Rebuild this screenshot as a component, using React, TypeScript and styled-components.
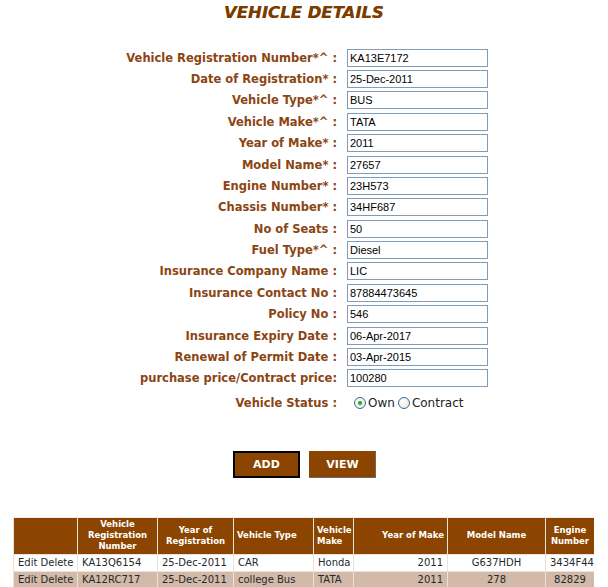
import React from "react";
import styled, { createGlobalStyle } from "styled-components";

const Global = createGlobalStyle`
  html, body { margin: 0; padding: 0; background: #fff; }
  body { font-family: "DejaVu Sans", Verdana, sans-serif; }
`;

const Page = styled.div`
  width: 608px;
  height: 587px;
  overflow: hidden;
  display: flex;
  flex-direction: column;
`;

const Title = styled.h1`
  margin: 0;
  padding-top: 3px;
  height: 20px;
  text-align: center;
  font: italic bold 16.5px "DejaVu Sans", Verdana, sans-serif;
  color: #7a3c00;
  text-shadow: 0 0 0.5px #a0601c;
`;

const Form = styled.div`
  margin-top: 24.3px;
  display: grid;
  grid-template-columns: 337px 141px;
  column-gap: 10px;
  grid-auto-rows: 21.4px;
  align-items: center;
`;

const Label = styled.div`
  text-align: right;
  font: bold 11.5px "DejaVu Sans", Verdana, sans-serif;
  color: #8b4513;
  white-space: nowrap;
`;

const Input = styled.input`
  box-sizing: border-box;
  width: 141px;
  height: 18px;
  margin: 0;
  padding: 0 2px;
  border: 1px solid #7f9db9;
  font: 11px "Liberation Sans", Arial, sans-serif;
  color: #000;
  background: #fff;
  outline: none;
`;

const StatusRow = styled.div`
  grid-column: 1 / span 2;
  height: 27px;
  display: grid;
  grid-template-columns: 337px auto;
  column-gap: 17px;
  align-items: center;
  align-self: start;
`;

const RadioGroup = styled.div`
  display: flex;
  align-items: center;
  font: 12px "DejaVu Sans", Verdana, sans-serif;
  color: #222;
`;

const RadioOption = styled.label`
  display: flex;
  align-items: center;
  gap: 2px;
  margin-right: 3px;
`;

const RadioCircle = styled.span<{ $checked?: boolean }>`
  box-sizing: border-box;
  width: 12px;
  height: 12px;
  border-radius: 50%;
  border: 1px solid #3c6890;
  background: radial-gradient(circle at 35% 35%, #ffffff 0%, #e4e4dc 100%);
  display: flex;
  align-items: center;
  justify-content: center;
  &::after {
    content: "";
    width: 4px;
    height: 4px;
    border-radius: 50%;
    background: ${(p) => (p.$checked ? "#34a834" : "transparent")};
    box-shadow: ${(p) => (p.$checked ? "0 0 1px #5fd05f" : "none")};
  }
`;

const Buttons = styled.div`
  margin-top: 40px;
  display: flex;
  justify-content: center;
  gap: 9px;
  padding-left: 1px;
`;

const Button = styled.button<{ $focused?: boolean }>`
  box-sizing: border-box;
  width: 67px;
  height: 27px;
  background: #8b4500;
  color: #fff;
  font: bold 11px "DejaVu Sans", Verdana, sans-serif;
  border: ${(p) => (p.$focused ? "2px solid #000" : "1px solid #8b4500")};
  border-right-color: ${(p) => (p.$focused ? "#000" : "#6a6a6a")};
  border-bottom-color: ${(p) => (p.$focused ? "#000" : "#6a6a6a")};
  padding: 0;
  cursor: pointer;
`;

const TableWrap = styled.div`
  margin-top: 39px;
  margin-left: 13px;
  width: 581px;
  overflow: hidden;
`;

const Table = styled.table`
  border-collapse: collapse;
  table-layout: fixed;
  width: 581px;
`;

const Th = styled.th<{ $align?: string }>`
  height: 36px;
  padding: 0 3px;
  background: #8b4500;
  color: #fff;
  font: bold 8.5px "DejaVu Sans", Verdana, sans-serif;
  line-height: 11px;
  text-align: ${(p) => p.$align || "center"};
  border: 1px solid #ece2d8;
  border-top: 1px solid #f2ece6;
  vertical-align: middle;
`;

const Tr = styled.tr<{ $alt?: boolean }>`
  background: ${(p) => (p.$alt ? "#d2b9a8" : "#fff")};
`;

const Td = styled.td<{ $align?: string }>`
  height: 16px;
  padding: 0 4px;
  font: 10px "DejaVu Sans", Verdana, sans-serif;
  color: #1f2a2e;
  text-align: ${(p) => p.$align || "left"};
  border: 1px solid #ece2d8;
  white-space: nowrap;
  overflow: hidden;
`;

const fields: [string, string][] = [
  ["Vehicle Registration Number*^ :", "KA13E7172"],
  ["Date of Registration* :", "25-Dec-2011"],
  ["Vehicle Type*^ :", "BUS"],
  ["Vehicle Make*^ :", "TATA"],
  ["Year of Make* :", "2011"],
  ["Model Name* :", "27657"],
  ["Engine Number* :", "23H573"],
  ["Chassis Number* :", "34HF687"],
  ["No of Seats :", "50"],
  ["Fuel Type*^ :", "Diesel"],
  ["Insurance Company Name :", "LIC"],
  ["Insurance Contact No :", "87884473645"],
  ["Policy No :", "546"],
  ["Insurance Expiry Date :", "06-Apr-2017"],
  ["Renewal of Permit Date :", "03-Apr-2015"],
  ["purchase price/Contract price:", "100280"],
];

const columns: { title: React.ReactNode; width: number; align?: string; dataAlign?: string }[] = [
  { title: "", width: 64 },
  { title: <>Vehicle<br />Registration<br />Number</>, width: 80 },
  { title: <>Year of<br />Registration</>, width: 76 },
  { title: "Vehicle Type", width: 80, align: "left" },
  { title: <>Vehicle<br />Make</>, width: 40, align: "left" },
  { title: "Year of Make", width: 94, align: "right", dataAlign: "right" },
  { title: "Model Name", width: 98, dataAlign: "center" },
  { title: <>Engine<br />Number</>, width: 49, dataAlign: "center" },
];

const rows = [
  ["Edit Delete", "KA13Q6154", "25-Dec-2011", "CAR", "Honda", "2011", "G637HDH", "3434F44"],
  ["Edit Delete", "KA12RC717", "25-Dec-2011", "college Bus", "TATA", "2011", "278", "82829"],
];

export default function App() {
  return (
    <>
      <Global />
      <Page>
        <Title>VEHICLE DETAILS</Title>
        <Form>
          {fields.map(([label, value]) => (
            <React.Fragment key={label}>
              <Label>{label}</Label>
              <Input defaultValue={value} />
            </React.Fragment>
          ))}
          <StatusRow>
            <Label>Vehicle Status :</Label>
            <RadioGroup>
              <RadioOption>
                <RadioCircle $checked />
                Own
              </RadioOption>
              <RadioOption>
                <RadioCircle />
                Contract
              </RadioOption>
            </RadioGroup>
          </StatusRow>
        </Form>
        <Buttons>
          <Button $focused>ADD</Button>
          <Button>VIEW</Button>
        </Buttons>
        <TableWrap>
          <Table>
            <colgroup>
              {columns.map((c, i) => (
                <col key={i} style={{ width: c.width }} />
              ))}
            </colgroup>
            <thead>
              <tr>
                {columns.map((c, i) => (
                  <Th key={i} $align={c.align}>
                    {c.title}
                  </Th>
                ))}
              </tr>
            </thead>
            <tbody>
              {rows.map((r, ri) => (
                <Tr key={ri} $alt={ri % 2 === 1}>
                  {r.map((cell, ci) => (
                    <Td key={ci} $align={columns[ci].dataAlign}>
                      {cell}
                    </Td>
                  ))}
                </Tr>
              ))}
            </tbody>
          </Table>
        </TableWrap>
      </Page>
    </>
  );
}
